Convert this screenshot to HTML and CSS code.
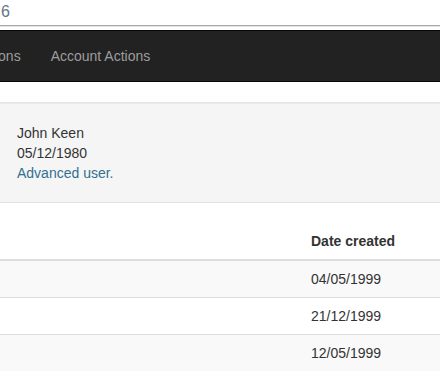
FILE: index.html
```html
<!DOCTYPE html>
<html lang="en">
<head>
    <meta charset="UTF-8">
    <meta name="viewport" content="width=device-width, initial-scale=1.0">
    <title>Account</title>
    <link rel="stylesheet" href="styles.css">
</head>
<body>

<div class="search">
    <span class="search-text">6</span>
</div>

<nav class="navbar">
    <ul class="nav">
        <li><a href="#">Transactions</a></li>
        <li><a href="#">Account Actions</a></li>
    </ul>
</nav>

<div class="well">
    <div>John Keen</div>
    <div>05/12/1980</div>
    <div class="info">Advanced user.</div>
</div>

<table class="table">
    <thead>
        <tr>
            <th class="spacer"></th>
            <th>Date created</th>
            <th></th>
        </tr>
    </thead>
    <tbody>
        <tr>
            <td></td>
            <td>04/05/1999</td>
            <td></td>
        </tr>
        <tr>
            <td></td>
            <td>21/12/1999</td>
            <td></td>
        </tr>
        <tr>
            <td></td>
            <td>12/05/1999</td>
            <td></td>
        </tr>
    </tbody>
</table>

</body>
</html>
```

FILE: styles.css
```css
* {
    box-sizing: border-box;
}
body {
    margin: 0;
    overflow: hidden;
    font-family: "Liberation Sans", Arial, sans-serif;
    font-size: 14px;
    line-height: 20px;
    color: #333;
    background-color: #fff;
}
.search {
    height: 26px;
    padding: 2px 1px;
    border-bottom: 1px solid #a9a9a9;
    box-shadow: 0 1px 0 #e2e2e2;
    margin-bottom: 4px;
}
.search-text {
    font-size: 16px;
    color: #66758a;
}
.navbar {
    background-color: #222;
    border-top: 1px solid #080808;
    border-bottom: 1px solid #080808;
    height: 52px;
    margin-bottom: 20px;
}
.nav {
    display: flex;
    list-style: none;
    margin: 0 0 0 -74px;
    padding: 0;
}
.nav a {
    display: block;
    padding: 15px;
    color: #9d9d9d;
    text-decoration: none;
    white-space: nowrap;
}
.well {
    background-color: #f5f5f5;
    border-top: 1px solid #e3e3e3;
    border-bottom: 1px solid #e3e3e3;
    box-shadow: inset 0 1px 1px rgba(0, 0, 0, 0.05);
    padding: 20px 17px 19px;
    margin-bottom: 20px;
}
.info {
    color: #31708f;
}
.table {
    width: 600px;
    border-collapse: collapse;
    border-spacing: 0;
}
.table th,
.table td {
    padding: 8px;
    text-align: left;
    line-height: 20px;
    white-space: nowrap;
}
.table th {
    font-weight: bold;
    border-bottom: 2px solid #ddd;
}
.table td {
    border-top: 1px solid #ddd;
}
.table tbody tr:first-child td {
    border-top: 0;
}
.table tbody tr:nth-child(odd) {
    background-color: #f9f9f9;
}
.spacer {
    width: 303px;
}
```
